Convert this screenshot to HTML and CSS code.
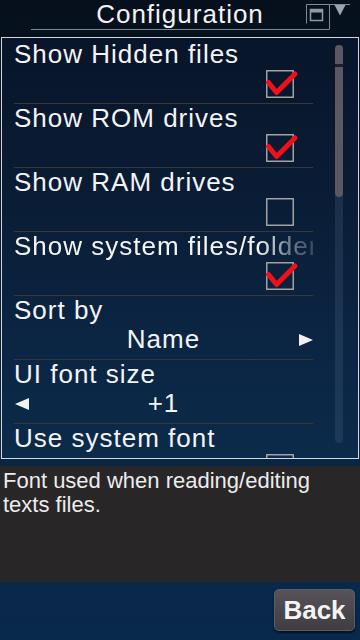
FILE: index.html
```html
<!DOCTYPE html>
<html lang="en">
<head>
    <meta charset="UTF-8">
    <meta name="viewport" content="width=device-width, initial-scale=1.0">
    <title>Configuration</title>
    <link rel="stylesheet" href="styles.css">
</head>
<body>
    <div class="screen">
        <div class="header">
            <h1 class="title">Configuration</h1>
            <svg class="window-ctl" width="50" height="30" viewBox="0 0 50 30">
                <path d="M1.5 19.5 V0.5 H45" fill="none" stroke="#7f8998" stroke-width="1"/>
                <path d="M24.5 0.5 V25.5" fill="none" stroke="#7f8998" stroke-width="1"/>
                <rect x="5.5" y="5.5" width="12" height="11" fill="none" stroke="#8f98a6" stroke-width="1.5"/>
                <rect x="5.5" y="5.5" width="12" height="3" fill="#8f98a6"/>
                <path d="M29.5 1 H40.5 L35 11.5 Z" fill="#9aa3b0"/>
            </svg>
        </div>

        <div class="panel">
            <div class="row">
                <div class="label">Show Hidden files</div>
                <div class="control">
                    <svg class="check" width="28" height="28" viewBox="0 0 28 28">
                        <rect x="0.75" y="0.75" width="26.5" height="26.5" fill="none" stroke="#a2a2a2" stroke-width="1.5"/>
                        <path d="M2.5 12.5 L10.5 22.5 L29 4" fill="none" stroke="#f0101a" stroke-width="5" stroke-linejoin="round" stroke-linecap="round"/>
                    </svg>
                </div>
            </div>
            <div class="row">
                <div class="label">Show ROM drives</div>
                <div class="control">
                    <svg class="check" width="28" height="28" viewBox="0 0 28 28">
                        <rect x="0.75" y="0.75" width="26.5" height="26.5" fill="none" stroke="#a2a2a2" stroke-width="1.5"/>
                        <path d="M2.5 12.5 L10.5 22.5 L29 4" fill="none" stroke="#f0101a" stroke-width="5" stroke-linejoin="round" stroke-linecap="round"/>
                    </svg>
                </div>
            </div>
            <div class="row">
                <div class="label">Show RAM drives</div>
                <div class="control">
                    <svg class="check" width="28" height="28" viewBox="0 0 28 28">
                        <rect x="0.75" y="0.75" width="26.5" height="26.5" fill="none" stroke="#a2a2a2" stroke-width="1.5"/>
                    </svg>
                </div>
            </div>
            <div class="row">
                <div class="label label-cut">Show system files/folders</div>
                <div class="control">
                    <svg class="check" width="28" height="28" viewBox="0 0 28 28">
                        <rect x="0.75" y="0.75" width="26.5" height="26.5" fill="none" stroke="#a2a2a2" stroke-width="1.5"/>
                        <path d="M2.5 12.5 L10.5 22.5 L29 4" fill="none" stroke="#f0101a" stroke-width="5" stroke-linejoin="round" stroke-linecap="round"/>
                    </svg>
                </div>
            </div>
            <div class="row">
                <div class="label">Sort by</div>
                <div class="choice">
                    <span class="arrow"></span>
                    <span class="value">Name</span>
                    <span class="arrow">
                        <svg width="14" height="12" viewBox="0 0 14 12"><path d="M0 0 L14 6 L0 12 Z" fill="#f2f2f2"/></svg>
                    </span>
                </div>
            </div>
            <div class="row">
                <div class="label">UI font size</div>
                <div class="choice">
                    <span class="arrow">
                        <svg width="14" height="12" viewBox="0 0 14 12"><path d="M14 0 L0 6 L14 12 Z" fill="#f2f2f2"/></svg>
                    </span>
                    <span class="value">+1</span>
                    <span class="arrow"></span>
                </div>
            </div>
            <div class="row">
                <div class="label">Use system font</div>
                <div class="control">
                    <svg class="check" width="28" height="28" viewBox="0 0 28 28">
                        <rect x="0.75" y="0.75" width="26.5" height="26.5" fill="none" stroke="#a2a2a2" stroke-width="1.5"/>
                    </svg>
                </div>
            </div>

            <div class="scrollbar">
                <div class="thumb"></div>
            </div>
        </div>

        <div class="help">Font used when reading/editing texts files.</div>

        <div class="footer">
            <button class="back">Back</button>
        </div>
    </div>
</body>
</html>
```

FILE: styles.css
```css
* {
    box-sizing: border-box;
}

body {
    margin: 0;
    background: #07111e;
    font-family: "Liberation Sans", Arial, sans-serif;
    color: #f4f4f4;
}

.screen {
    width: 360px;
    height: 640px;
    overflow: hidden;
    display: flex;
    flex-direction: column;
    background: linear-gradient(to bottom, #06101c 0%, #081a30 45%, #0b2746 75%, #08284c 100%);
}

.header {
    position: relative;
    height: 37px;
}

.title {
    margin: 0 31px;
    height: 30px;
    border-bottom: 1px solid #7f8998;
    font-size: 26px;
    font-weight: normal;
    line-height: 28px;
    letter-spacing: 1px;
    text-align: center;
    color: #f2f2f2;
}

.window-ctl {
    position: absolute;
    left: 305px;
    top: 4px;
}

.panel {
    position: relative;
    height: 422px;
    margin: 0 1px;
    padding-top: 2px;
    border: 1px solid #d4d8dc;
    background: linear-gradient(to bottom, #08152a 0%, #0a1d36 40%, #0b2644 75%, #0c2a4a 100%);
    overflow: hidden;
}

.row {
    width: 299px;
    height: 64px;
    margin-left: 12px;
    padding-bottom: 5px;
    border-bottom: 1px solid #3a3836;
}

.label {
    font-size: 26px;
    line-height: 28px;
    letter-spacing: 1px;
    white-space: nowrap;
    overflow: hidden;
}

.label-cut {
    -webkit-mask-image: linear-gradient(to right, #000 82%, rgba(0, 0, 0, 0.45) 92%, rgba(0, 0, 0, 0.2) 100%);
    mask-image: linear-gradient(to right, #000 82%, rgba(0, 0, 0, 0.45) 92%, rgba(0, 0, 0, 0.2) 100%);
}

.control {
    display: flex;
    justify-content: flex-end;
    padding-top: 2px;
    padding-right: 19px;
}

.check {
    display: block;
    overflow: visible;
}

.choice {
    display: flex;
    align-items: center;
    height: 30px;
}

.arrow {
    width: 15px;
    display: flex;
    justify-content: center;
    padding-top: 2px;
}

.value {
    flex: 1;
    text-align: center;
    font-size: 26px;
    line-height: 30px;
    letter-spacing: 1px;
}

.scrollbar {
    position: absolute;
    left: 333px;
    top: 7px;
    width: 8px;
    height: 398px;
    border-radius: 4px;
    background: rgba(120, 145, 175, 0.16);
}

.thumb {
    height: 152px;
    border-radius: 4px;
    background: linear-gradient(to bottom, #5c5862 0 19px, #1a2030 19px 22px, #5c5862 22px);
}

.help {
    height: 116px;
    margin-top: 7px;
    padding: 3px 3px 0;
    background: #292628;
    font-size: 22px;
    line-height: 24px;
    color: #ececec;
}

.footer {
    flex: 1;
    display: flex;
    justify-content: flex-end;
    align-items: flex-start;
    padding: 7px 5px 0 0;
}

.back {
    width: 81px;
    height: 42px;
    padding: 0;
    border: 1px solid #5e5e62;
    border-radius: 5px;
    background: linear-gradient(to bottom, #565458 0%, #4a484c 50%, #403e42 100%);
    box-shadow: 0 2px 2px rgba(0, 0, 0, 0.5);
    font-family: "Liberation Sans", Arial, sans-serif;
    font-size: 26px;
    font-weight: bold;
    color: #f4f4f4;
    cursor: pointer;
}
```
